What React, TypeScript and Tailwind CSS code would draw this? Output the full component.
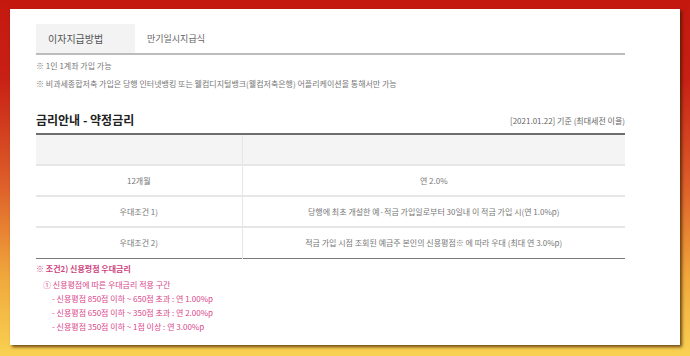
import React from "react";

const rows = [
  { label: "12개월", value: "연 2.0%" },
  { label: "우대조건 1)", value: "당행에 최초 개설한 예·적금 가입일로부터 30일내 이 적금 가입 시(연 1.0%p)" },
  { label: "우대조건 2)", value: "적금 가입 시점 조회된 예금주 본인의 신용평점※ 에 따라 우대 (최대 연 3.0%p)" },
];

const scoreLines = [
  "- 신용평점 850점 이하 ~ 650점 초과 : 연 1.00%p",
  "- 신용평점 650점 이하 ~ 350점 초과 : 연 2.00%p",
  "- 신용평점 350점 이하 ~ 1점 이상 : 연 3.00%p",
];

export default function App() {
  return (
    <div
      className="h-[356px] w-[690px] overflow-hidden bg-[linear-gradient(180deg,#c4180f_0%,#c82015_22%,#de5f2a_52%,#f0a83c_78%,#f9d152_100%)] pl-[10px] pt-[9px]"
      style={{ fontFamily: '"Noto Sans CJK KR", "Noto Sans", sans-serif' }}
    >
      <div className="h-[336px] w-[670px] bg-white pl-[26px] pt-[15px] shadow-[2px_2px_3px_rgba(60,30,0,0.75)]">
        <div className="w-[589px]">
          {/* 탭 */}
          <div className="flex h-[31px] border-b-2 border-[#bcbcbc]">
            <div className="flex w-[99px] items-center bg-[#f3f3f3] pl-[12px] text-[10px] text-[#555]">
              이자지급방법
            </div>
            <div className="flex items-center pl-[12px] text-[9px] text-[#666]">만기일시지급식</div>
          </div>

          <p className="mt-[5px] text-[8px] leading-[12px] text-[#777]">※ 1인 1계좌 가입 가능</p>
          <p className="mt-[6px] text-[8px] leading-[12px] text-[#777]">
            ※ 비과세종합저축 가입은 당행 인터넷뱅킹 또는 웰컴디지털뱅크(웰컴저축은행) 어플리케이션을 통해서만 가능
          </p>

          {/* 금리안내 */}
          <div className="mt-[22px] flex items-end justify-between">
            <h2 className="text-[12px] font-bold leading-[16px] text-[#222]">금리안내 - 약정금리</h2>
            <span className="pb-[1px] text-[8px] leading-[12px] text-[#666]">[2021.01.22] 기준 (최대세전 이율)</span>
          </div>

          <table className="mt-[5px] w-full border-collapse border-t-2 border-b border-t-[#6e6e6e] border-b-[#7a7a7a] text-[8px] text-[#777]">
            <thead>
              <tr className="h-[31px] bg-[#f4f4f4]">
                <th className="w-[206px] border-r border-b-2 border-[#e6e6e6]"></th>
                <th className="border-b-2 border-[#e6e6e6]"></th>
              </tr>
            </thead>
            <tbody>
              {rows.map((r, i) => (
                <tr key={r.label} className="h-[31px]">
                  <td
                    className={`border-r border-[#e6e6e6] text-center ${i < rows.length - 1 ? "border-b-2" : ""}`}
                  >
                    {r.label}
                  </td>
                  <td className={`border-[#e6e6e6] text-center ${i < rows.length - 1 ? "border-b-2" : ""}`}>
                    {r.value}
                  </td>
                </tr>
              ))}
            </tbody>
          </table>

          {/* 우대금리 안내 */}
          <div className="mt-[4px] text-[8px] text-[#d9468a]">
            <p className="font-bold leading-[12px] text-[#cf3f7d]">※ 조건2) 신용평점 우대금리</p>
            <p className="mt-[4px] pl-[7px] leading-[12px]">① 신용평점에 따른 우대금리 적용 구간</p>
            <div className="pl-[16px]">
              {scoreLines.map((l) => (
                <p key={l} className="mt-[2px] leading-[12px]">
                  {l}
                </p>
              ))}
            </div>
          </div>
        </div>
      </div>
    </div>
  );
}
